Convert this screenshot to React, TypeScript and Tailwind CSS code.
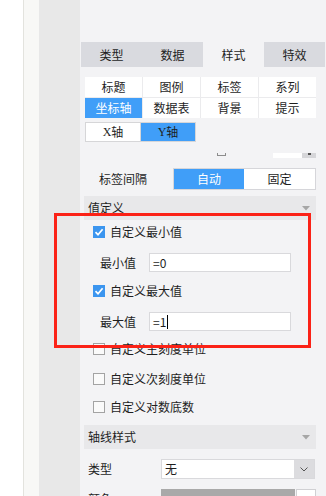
import React from "react";

function Check({ checked, label, mt }: { checked?: boolean; label: string; mt: string }) {
  return (
    <div className={`flex items-center h-[12px] ml-[13px] gap-[5px] ${mt}`}>
      {checked ? (
        <div className="w-[12px] h-[12px] bg-[#3b95ef] flex items-center justify-center">
          <svg width="10" height="10" viewBox="0 0 10 10">
            <path d="M1.5 5.2 L4 7.7 L8.6 2.2" stroke="white" strokeWidth="1.7" fill="none" />
          </svg>
        </div>
      ) : (
        <div className="w-[12px] h-[12px] border border-[#a3a3a3] bg-[#fafafa]" />
      )}
      <span className="text-[12px] leading-none text-[#1e1e1e]">{label}</span>
    </div>
  );
}

function Caret() {
  return (
    <svg width="8" height="5" viewBox="0 0 8 5" className="mr-[6px]">
      <path d="M0 0 H8 L4 4.5 Z" fill="#a6a6a6" />
    </svg>
  );
}

export default function App() {
  return (
    <div className="relative flex w-[326px] h-[496px] overflow-hidden font-['Noto_Sans_CJK_SC',sans-serif] text-[#1e1e1e]">
      <div className="w-[23px] bg-white" />
      <div className="w-[1px] bg-[#e3e3de]" />
      <div className="w-[15px] bg-[#f8f8f6]" />
      <div className="w-[41px] bg-[#e8e8e8]" />
      <div className="flex-1 bg-[#f3f3f5] flex flex-col [&>*]:shrink-0">
        {/* tabs */}
        <div className="mt-[42px] ml-[1px] w-[244px] h-[25px] grid grid-cols-4 text-[12px]">
          <div className="bg-[#d9dadf] flex items-center justify-center">类型</div>
          <div className="bg-[#d9dadf] flex items-center justify-center">数据</div>
          <div className="bg-[#f3f3f5] flex items-center justify-center">样式</div>
          <div className="bg-[#d9dadf] flex items-center justify-center">特效</div>
        </div>
        {/* sub tabs */}
        <div className="mt-[10px] ml-[5px] w-[231px] grid grid-cols-4 gap-px bg-[#ebebed] text-[12px]">
          {["标题", "图例", "标签", "系列", "坐标轴", "数据表", "背景", "提示"].map((t) => (
            <div
              key={t}
              className={`h-[20px] flex items-center justify-center ${t === "坐标轴" ? "bg-[#409ef8] text-white" : "bg-white"}`}
            >
              {t}
            </div>
          ))}
        </div>
        {/* X/Y */}
        <div className="mt-[4px] ml-[5px] flex text-[12px]">
          <div className="w-[56px] h-[20px] border border-[#d6d6d8] bg-white flex items-center justify-center">
            <span className="font-['Liberation_Serif',serif]">X</span>轴
          </div>
          <div className="w-[55px] h-[20px] border border-l-0 border-[#d6d6d8] bg-[#409ef8] flex items-center justify-center">
            <span className="font-['Liberation_Serif',serif]">Y</span>轴
          </div>
        </div>
        {/* clipped row */}
        <div className="mt-[11px] h-[5px] flex items-start">
          <div className="ml-[137px] w-[9px] h-[3px] border-l border-r border-b border-[#8c8c8c]" />
          <div className="ml-[47px] w-[29px] h-[5px] bg-white" />
          <div className="w-[14px] h-[5px] bg-[#d6d6d9] flex justify-center">
            <div className="w-[3px] h-[2px] bg-[#555]" />
          </div>
        </div>
        {/* 标签间隔 */}
        <div className="mt-[10px] flex items-center h-[22px]">
          <span className="ml-[19px] w-[74px] text-[12px]">标签间隔</span>
          <div className="w-[143px] h-[22px] border border-[#d6d6da] flex text-[12px]">
            <div className="w-[70px] bg-[#409ef8] text-white flex items-center justify-center">自动</div>
            <div className="flex-1 bg-white flex items-center justify-center">固定</div>
          </div>
        </div>
        {/* 值定义 header */}
        <div className="mt-[6px] ml-[4px] w-[232px] h-[24px] bg-[#e8e8ea] flex items-center justify-between text-[12px]">
          <span className="ml-[4px]">值定义</span>
          <Caret />
        </div>
        <Check checked label="自定义最小值" mt="mt-[6px]" />
        <div className="mt-[15px] flex items-center h-[19px] text-[12px]">
          <span className="ml-[20px] w-[49px]">最小值</span>
          <div className="w-[142px] h-[19px] border border-[#d9d9dc] bg-white flex items-center pl-[3px] leading-none">=0</div>
        </div>
        <Check checked label="自定义最大值" mt="mt-[13px]" />
        <div className="mt-[15px] flex items-center h-[19px] text-[12px]">
          <span className="ml-[20px] w-[49px]">最大值</span>
          <div className="w-[142px] h-[19px] border border-[#d9d9dc] bg-white flex items-center pl-[3px] leading-none">
            =1<span className="inline-block w-px h-[14px] bg-black ml-px" />
          </div>
        </div>
        <Check label="自定义主刻度单位" mt="mt-[12px]" />
        <Check label="自定义次刻度单位" mt="mt-[18px]" />
        <Check label="自定义对数底数" mt="mt-[16px]" />
        {/* 轴线样式 header */}
        <div className="mt-[12px] ml-[4px] w-[232px] h-[24px] bg-[#e8e8ea] flex items-center justify-between text-[12px]">
          <span className="ml-[4px]">轴线样式</span>
          <Caret />
        </div>
        <div className="mt-[10px] flex items-center h-[20px] text-[12px]">
          <span className="ml-[8px] w-[73px]">类型</span>
          <div className="w-[154px] h-[20px] border border-[#d9d9dc] bg-white flex">
            <div className="flex-1 flex items-center pl-[3px]">无</div>
            <div className="w-[20px] bg-[#dcdcdf] flex items-center justify-center">
              <svg width="8" height="5" viewBox="0 0 8 5">
                <path d="M0.5 0.5 L4 4 L7.5 0.5" stroke="#555" strokeWidth="1" fill="none" />
              </svg>
            </div>
          </div>
        </div>
        <div className="mt-[10px] flex items-start h-[20px] text-[12px]">
          <span className="ml-[8px] w-[73px] leading-[20px]">颜色</span>
          <div className="w-[134px] h-[20px] bg-[#a9a9a9]" />
          <div className="ml-[1px] w-[20px] h-[20px] border border-[#d0d0d3] bg-white" />
        </div>
      </div>
      {/* red annotation box */}
      <div className="absolute left-[54px] top-[213px] w-[257px] h-[135px] border-[3px] border-[#fb2217]" />
    </div>
  );
}
